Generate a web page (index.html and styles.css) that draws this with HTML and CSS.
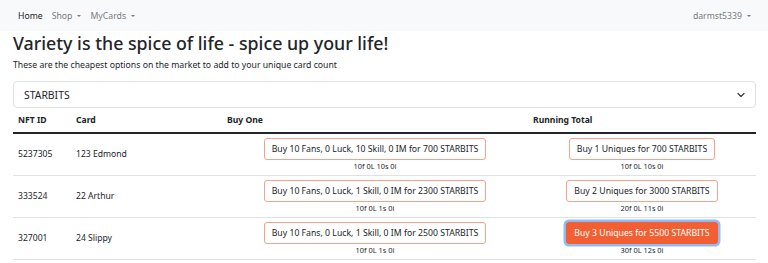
FILE: index.html
```html
<!DOCTYPE html>
<html>
<head>
<title>Uniques</title>
<link rel="stylesheet" href="styles.css">
</head>
<body>

<nav class="navbar">
  <div class="nav-left">
    <a class="nav-link active" href="#">Home</a>
    <a class="nav-link dropdown" href="#">Shop</a>
    <a class="nav-link dropdown" href="#">MyCards</a>
  </div>
  <a class="nav-link dropdown" href="#">darmst5339</a>
</nav>

<div class="container">
  <h1>Variety is the spice of life - spice up your life!</h1>
  <p class="lead">These are the cheapest options on the market to add to your unique card count</p>

  <div class="select">
    <span>STARBITS</span>
    <svg width="8" height="6" viewBox="0 0 16 12"><path d="M2 3l6 6 6-6" fill="none" stroke="#343a40" stroke-width="2.4" stroke-linecap="round" stroke-linejoin="round"/></svg>
  </div>

  <table class="cards">
    <thead>
      <tr>
        <th class="c-id">NFT ID</th>
        <th class="c-card">Card</th>
        <th class="c-one">Buy One</th>
        <th class="c-total">Running Total</th>
      </tr>
    </thead>
    <tbody>
      <tr>
        <td>5237305</td>
        <td>123 Edmond</td>
        <td class="buy"><button class="btn">Buy 10 Fans, 0 Luck, 10 Skill, 0 IM for 700 STARBITS</button><small>10f 0L 10s 0i</small></td>
        <td class="buy"><button class="btn">Buy 1 Uniques for 700 STARBITS</button><small>10f 0L 10s 0i</small></td>
      </tr>
      <tr>
        <td>333524</td>
        <td>22 Arthur</td>
        <td class="buy"><button class="btn">Buy 10 Fans, 0 Luck, 1 Skill, 0 IM for 2300 STARBITS</button><small>10f 0L 1s 0i</small></td>
        <td class="buy"><button class="btn">Buy 2 Uniques for 3000 STARBITS</button><small>20f 0L 11s 0i</small></td>
      </tr>
      <tr>
        <td>327001</td>
        <td>24 Slippy</td>
        <td class="buy"><button class="btn">Buy 10 Fans, 0 Luck, 1 Skill, 0 IM for 2500 STARBITS</button><small>10f 0L 1s 0i</small></td>
        <td class="buy"><button class="btn selected">Buy 3 Uniques for 5500 STARBITS</button><small>30f 0L 12s 0i</small></td>
      </tr>
    </tbody>
  </table>
</div>

</body>
</html>
```

FILE: styles.css
```css
body { margin: 0; font-family: "Noto Sans", "Open Sans", sans-serif; color: #212529; background: #fff; }

.navbar {
  display: flex;
  justify-content: space-between;
  align-items: center;
  height: 31px;
  padding: 0 17px 0 18px;
  background-color: #f8f9fa;
}
.nav-left { display: flex; gap: 9px; }
.nav-link {
  font-size: 8.7px;
  color: #777b80;
  text-decoration: none;
}
.nav-link.active { color: #212529; }
.dropdown::after {
  content: "";
  display: inline-block;
  margin-left: 5px;
  vertical-align: 1.5px;
  border-top: 2.5px solid;
  border-left: 2.5px solid transparent;
  border-right: 2.5px solid transparent;
}

.container { padding: 0 12px 0 13px; }

h1 {
  margin: 1px 0 0;
  font-size: 17.8px;
  font-weight: 500;
  line-height: 22px;
}
.lead { margin: 5px 0 10px; font-size: 8.7px; line-height: 12px; }

.select {
  display: flex;
  justify-content: space-between;
  align-items: center;
  height: 27px;
  padding: 0 10px 0 10px;
  border: 1px solid #dee2e6;
  border-radius: 4px;
  font-size: 10.4px;
  box-sizing: border-box;
}

.cards { width: 100%; border-collapse: collapse; font-size: 8.6px; }
.cards th {
  text-align: left;
  font-weight: 700;
  padding: 0 5px;
  height: 24px;
  border-bottom: 2px solid #212529;
}
.c-id { width: 48px; }
.c-card { width: 141px; }
.c-one { width: 296px; }
.cards tbody tr { height: 42px; }
.cards td {
  padding: 0 5px;
  border-bottom: 1px solid #dee2e6;
}
.cards td.buy { text-align: center; padding: 4px 5px 3px; }
.cards small { display: block; margin-top: 1px; font-size: 7.4px; line-height: 10px; }

.btn {
  display: block;
  width: fit-content;
  margin: 0 auto;
  padding: 4px 7px;
  font-family: inherit;
  font-size: 8.7px;
  line-height: 12px;
  color: #212529;
  background: #fff;
  border: 1px solid #f5a28c;
  border-radius: 3px;
}
.btn.selected {
  background-color: #f25f33;
  border-color: #f25f33;
  color: #fff;
  box-shadow: 0 0 0 2.5px #93bbf3;
}
```
